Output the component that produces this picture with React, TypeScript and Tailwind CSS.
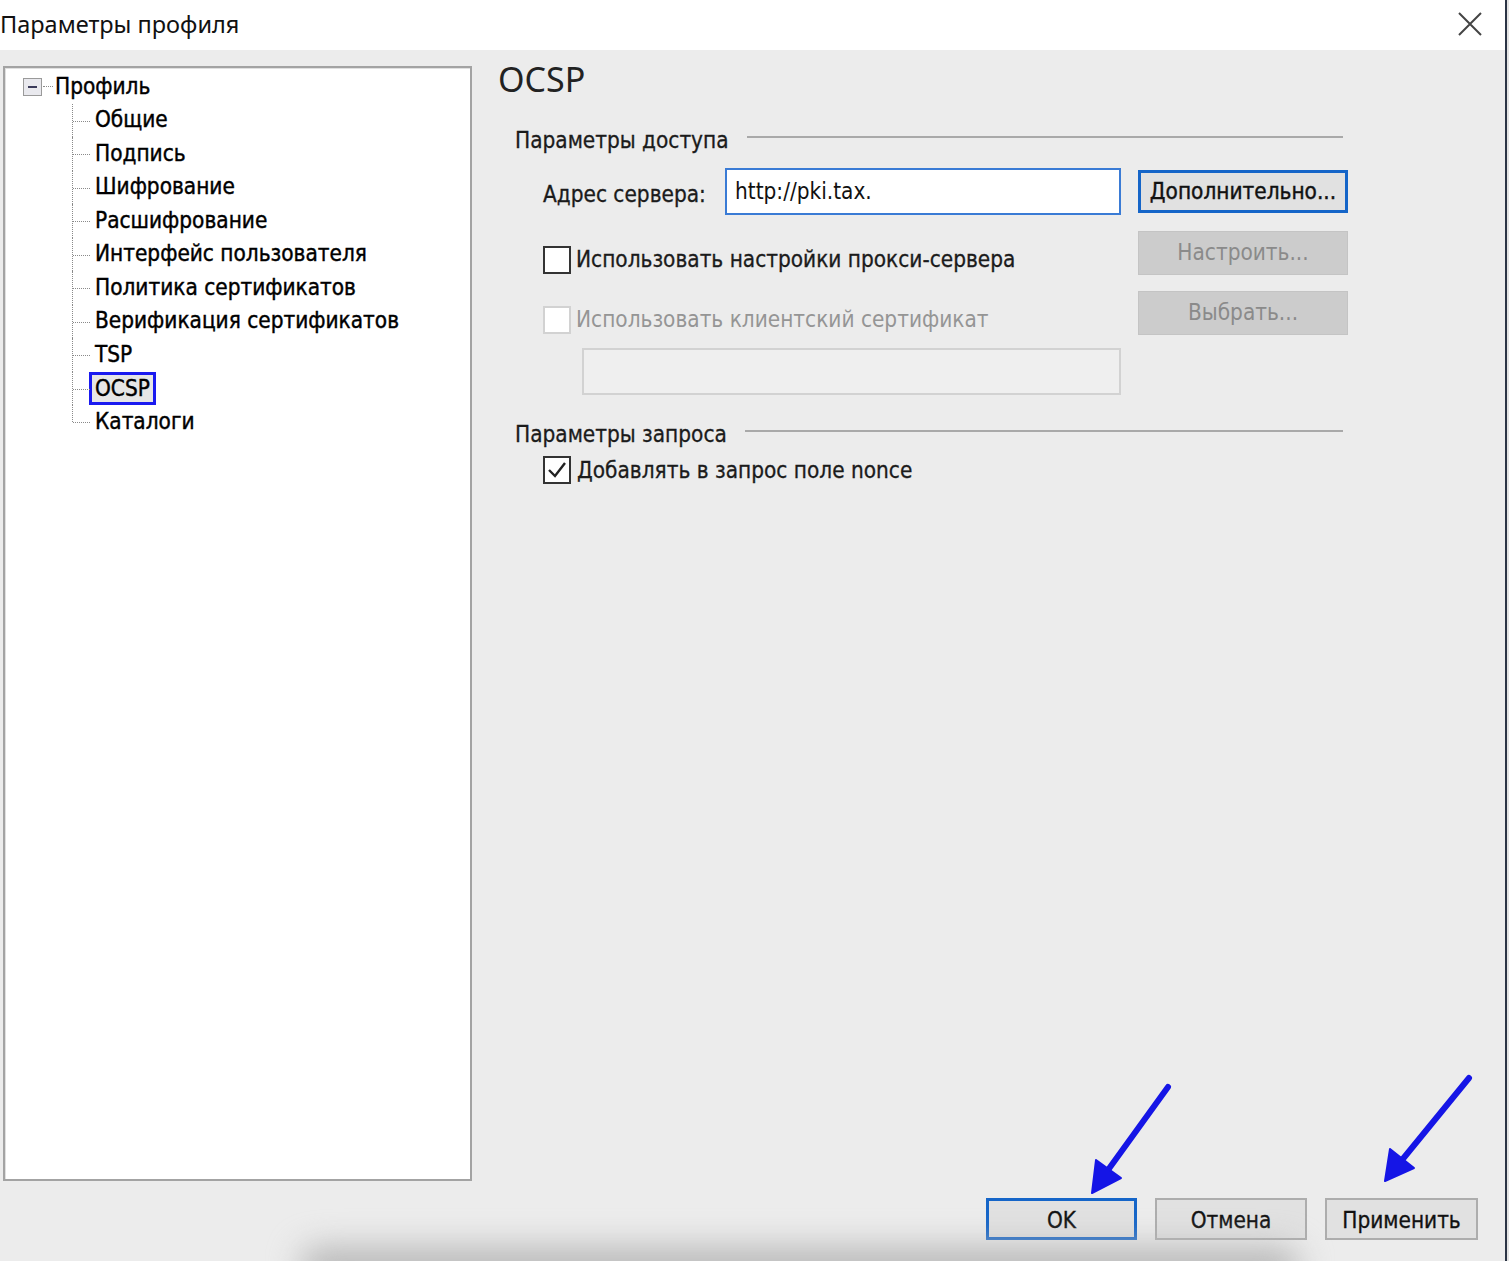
import React from "react";

const ui = { fontFamily: '"DejaVu Sans Condensed", "DejaVu Sans", sans-serif' };
const seg = { fontFamily: '"Noto Sans", "Open Sans", sans-serif' };

const children = [
  "Общие",
  "Подпись",
  "Шифрование",
  "Расшифрование",
  "Интерфейс пользователя",
  "Политика сертификатов",
  "Верификация сертификатов",
  "TSP",
  "OCSP",
  "Каталоги",
];

function TreeRow({ label, last, selected }: { label: string; last: boolean; selected: boolean }) {
  return (
    <div className="relative flex h-[33.5px] items-center pl-[67px]">
      <span
        className={`absolute left-[67px] top-0 border-l border-dotted border-[#8a8a8a] ${last ? "h-[17px]" : "h-full"}`}
      />
      <span className="absolute left-[68px] top-[17px] w-[17px] border-t border-dotted border-[#8a8a8a]" />
      <span
        className={
          selected
            ? "ml-[17px] border-[3px] border-[#1a1af0] bg-[#e6e6e6] px-[3px] leading-[27px]"
            : "ml-[23px]"
        }
      >
        {label}
      </span>
    </div>
  );
}

function Checkbox({ checked, disabled }: { checked?: boolean; disabled?: boolean }) {
  return (
    <span
      className={`flex h-[28px] w-[28px] shrink-0 items-center justify-center border-2 bg-white ${
        disabled ? "border-[#d2d2d2]" : "border-[#333]"
      }`}
    >
      {checked && (
        <svg width="22" height="22" viewBox="0 0 22 22">
          <polyline points="3,11 9,17 19,4" fill="none" stroke="#222" strokeWidth="2.4" />
        </svg>
      )}
    </span>
  );
}

function SectionHeader({ title }: { title: string }) {
  return (
    <div className="flex h-[28px] items-center pl-[17px] text-[#1b1b1b]">
      <span className="whitespace-nowrap">{title}</span>
      <span className="ml-[18px] mr-[5px] -mt-[9px] flex-1 border-t-2 border-[#a9a9a9]" />
    </div>
  );
}

function SideButton({ label, variant }: { label: string; variant: "focus" | "disabled" }) {
  return (
    <button
      className={
        variant === "focus"
          ? "h-[43px] w-[210px] whitespace-nowrap border-[3px] border-[#1565c8] bg-[#e1e1e1] text-[#111] [-webkit-text-stroke:0.4px_#111]"
          : "h-[44px] w-[210px] whitespace-nowrap border border-[#c4c4c4] bg-[#cccccc] text-[#8a8a8a]"
      }
    >
      {label}
    </button>
  );
}

export default function App() {
  return (
    <div
      className="relative flex h-[1261px] w-[1509px] overflow-hidden bg-[#ececec] text-[22.4px]"
      style={ui}
    >
      <div className="flex w-[1505px] flex-col">
        {/* title bar */}
        <div className="flex h-[50px] items-center justify-between bg-white">
          <span className="text-[23.5px] text-[#111]" style={seg}>
            Параметры профиля
          </span>
          <svg width="26" height="26" viewBox="0 0 26 26" className="mr-[22px] -mt-[2px]">
            <path d="M2 2 L24 24 M24 2 L2 24" stroke="#444" strokeWidth="2" />
          </svg>
        </div>

        <div className="flex">
          {/* tree */}
          <div className="ml-[3px] mt-[16px] h-[1115px] w-[469px] border-2 border-[#a3a3a3] bg-white pt-[2px] text-[#000] shadow-[inset_1px_1px_0_#e0e0e0] [-webkit-text-stroke:0.4px_#000]">
            <div className="relative flex h-[33.5px] items-center">
              <span className="ml-[18px] flex h-[18px] w-[19px] items-center justify-center border border-[#9a9a9a] bg-[#e9e9ee] [-webkit-text-stroke:0]">
                <span className="h-[2px] w-[9px] bg-[#3a3a5a]" />
              </span>
              <span className="ml-[1px] w-[10px] border-t border-dotted border-[#8a8a8a]" />
              <span className="ml-[2px]">Профиль</span>
            </div>
            {children.map((c, i) => (
              <TreeRow key={c} label={c} last={i === children.length - 1} selected={c === "OCSP"} />
            ))}
          </div>

          {/* right pane */}
          <div className="ml-[26px] flex w-[850px] flex-col text-[#1b1b1b]">
            <div className="mt-[9px] h-[40px] text-[34px] leading-[40px] text-[#222]" style={seg}>
              OCSP
            </div>

            <div className="mt-[28px] [-webkit-text-stroke:0.3px_#1b1b1b]">
              <SectionHeader title="Параметры доступа" />
            </div>

            <div className="mt-[13px] flex h-[47px] items-center">
              <span className="ml-[45px] mt-[6px] w-[182px] whitespace-nowrap [-webkit-text-stroke:0.3px_#1b1b1b]">
                Адрес сервера:
              </span>
              <div className="flex h-[47px] w-[396px] items-start border-2 border-[#3a7bd5] bg-white pl-[8px] pt-[5px]">
                <span className="text-[#111]">http://pki.tax.</span>
              </div>
              <div className="ml-[17px]">
                <SideButton label="Дополнительно..." variant="focus" />
              </div>
            </div>

            <div className="mt-[16px] flex h-[44px] items-center">
              <span className="ml-[45px] mt-[13px] flex items-center">
                <Checkbox />
                <span className="ml-[5px] w-[562px] whitespace-nowrap [-webkit-text-stroke:0.3px_#1b1b1b]">
                  Использовать настройки прокси-сервера
                </span>
              </span>
              <SideButton label="Настроить..." variant="disabled" />
            </div>

            <div className="mt-[16px] flex h-[44px] items-center">
              <span className="ml-[45px] mt-[14px] flex items-center">
                <Checkbox disabled />
                <span className="ml-[5px] w-[562px] whitespace-nowrap text-[#959595]">
                  Использовать клиентский сертификат
                </span>
              </span>
              <SideButton label="Выбрать..." variant="disabled" />
            </div>

            <div className="ml-[84px] mt-[13px] h-[47px] w-[539px] border-2 border-[#d2d2d2] bg-[#efefef]" />

            <div className="mt-[26px] [-webkit-text-stroke:0.3px_#1b1b1b]">
              <SectionHeader title="Параметры запроса" />
            </div>

            <div className="mt-[7px] flex h-[28px] items-center">
              <span className="ml-[45px]">
                <Checkbox checked />
              </span>
              <span className="ml-[6px] mt-[2px] whitespace-nowrap [-webkit-text-stroke:0.3px_#1b1b1b]">
                Добавлять в запрос поле nonce
              </span>
            </div>
          </div>
        </div>

        {/* bottom buttons */}
        <div className="mt-[17px] flex justify-end gap-[18px] pr-[27px] text-[#111] [-webkit-text-stroke:0.3px_#111]">
          <button className="h-[42px] w-[151px] border-[3px] border-[#1565c8] bg-[#e1e1e1] pt-[3px]">OK</button>
          <button className="h-[42px] w-[152px] border-2 border-[#adadad] bg-[#e1e1e1] pt-[3px]">Отмена</button>
          <button className="h-[42px] w-[153px] border-2 border-[#adadad] bg-[#e1e1e1] pt-[3px]">Применить</button>
        </div>
      </div>
      <div className="w-[2px] bg-[#2b3445]" />
      <div className="w-[2px] bg-[#e4e4e4]" />

      {/* bottom shadow */}
      <div className="pointer-events-none absolute bottom-[-26px] left-[300px] h-[40px] w-[1000px] rounded-full bg-[#b8b8b8] blur-lg" />

      {/* annotation arrows */}
      <svg className="pointer-events-none absolute left-0 top-0" width="1509" height="1261">
        <g stroke="#1515e6" strokeWidth="6" strokeLinecap="round" fill="#1515e6">
          <line x1="1168" y1="1087" x2="1108" y2="1170" />
          <polygon points="1092,1193 1096,1160 1121,1178" strokeWidth="2" strokeLinejoin="round" />
          <line x1="1469" y1="1078" x2="1402" y2="1160" />
          <polygon points="1385,1181 1390,1149 1414,1168" strokeWidth="2" strokeLinejoin="round" />
        </g>
      </svg>
    </div>
  );
}
